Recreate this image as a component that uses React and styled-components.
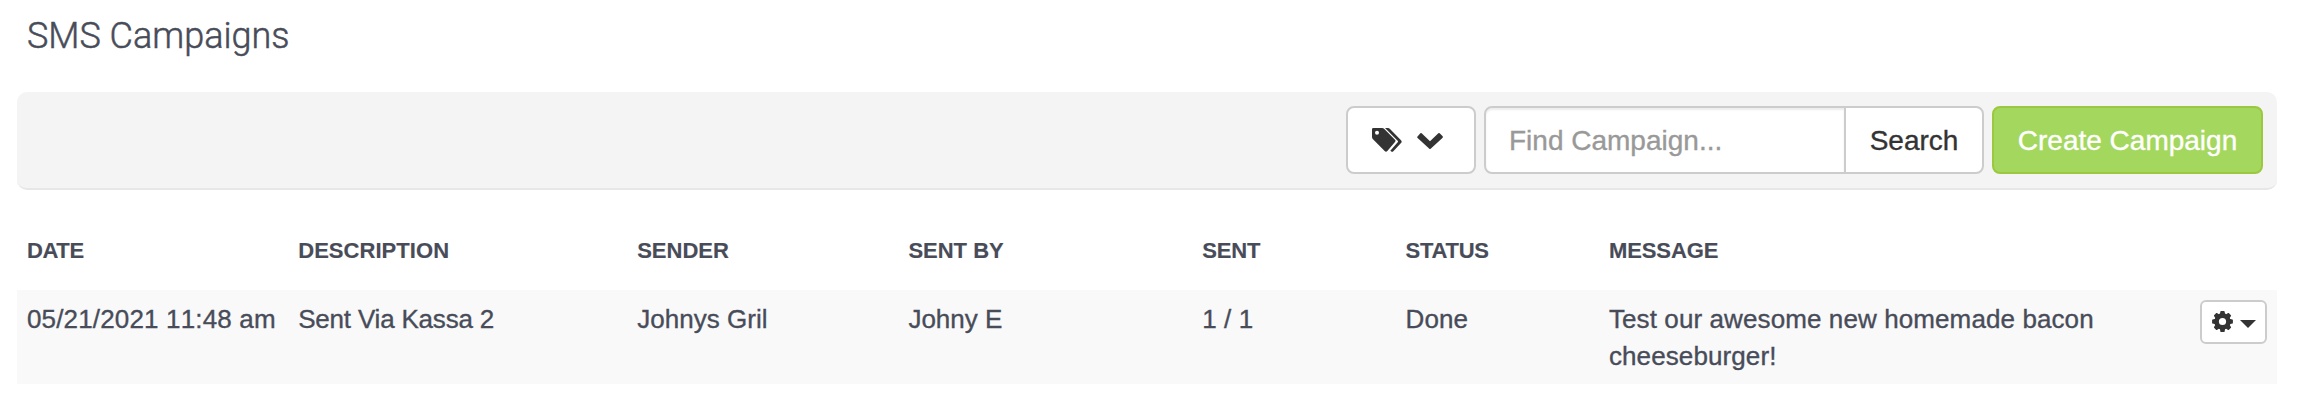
import React from "react";
import styled, { createGlobalStyle, css } from "styled-components";

const GlobalStyle = createGlobalStyle`
  *, *::before, *::after { box-sizing: border-box; }
  body {
    margin: 0;
    background: #fff;
    color: #484c59;
    font-family: "Liberation Sans", Arial, sans-serif;
    font-size: 26px;
    line-height: 37px;
    font-kerning: normal;
    -webkit-text-stroke: 0.35px currentColor;
  }
`;

const Page = styled.main`
  padding: 0 22px 0 17px;
`;

const Title = styled.h1`
  margin: 0;
  padding: 16px 10px 0;
  height: 92px;
  font-family: Roboto, sans-serif;
  font-size: 36px;
  font-weight: 300;
  line-height: 40px;
  -webkit-text-stroke-width: 0.5px;
`;

const Toolbar = styled.div`
  display: flex;
  justify-content: flex-end;
  align-items: flex-start;
  gap: 8px;
  height: 98px;
  padding: 14px;
  background: #f4f4f4;
  border-bottom: 2px solid #e7e7e7;
  border-radius: 10px;
`;

const control = css`
  height: 68px;
  border: 2px solid #ccc;
  border-radius: 8px;
  background: #fff;
  color: #333;
  font-family: inherit;
  font-size: 28px;
  line-height: 40px;
`;

const Button = styled.button`
  ${control}
  display: flex;
  align-items: center;
  justify-content: center;
  width: ${(p) => p.$width}px;
  padding: 2px 0 0;
  white-space: nowrap;
  ${(p) => p.$primary && css`
    background: #a4d75e;
    border-color: #9bc840;
    color: #fff;
  `}
`;

const TagsButton = styled(Button)`
  justify-content: flex-start;
  padding: 0 0 0 24px;
  gap: 15px;
`;

const SearchGroup = styled.div`
  display: flex;

  ${Button} {
    margin-left: -2px;
    border-radius: 0 8px 8px 0;
  }
`;

const SearchInput = styled.input`
  ${control}
  width: 362px;
  padding: 13px 23px 11px;
  border-radius: 8px 0 0 8px;
  box-shadow: inset 0 2px 2px rgba(0, 0, 0, 0.075);
  outline: none;

  &::placeholder {
    color: #999;
    opacity: 1;
    -webkit-text-stroke: 0.35px #999;
  }
`;

const Table = styled.table`
  width: 100%;
  margin-top: 34px;
  table-layout: fixed;
  border-collapse: collapse;
`;

const Col = styled.col`
  width: ${(p) => p.$share}%;
`;

const HeadCell = styled.th`
  height: 66px;
  padding: 11px 10px 23px;
  font-size: 22px;
  line-height: 32px;
  font-weight: 700;
  text-align: left;
  text-transform: uppercase;
  vertical-align: top;
  letter-spacing: ${(p) => p.$tracking || 0}px;
  -webkit-text-stroke-width: 0.15px;
`;

const Cell = styled.td`
  height: 94px;
  padding: 11px 10px 9px;
  background: #f9f9f9;
  vertical-align: top;
  letter-spacing: ${(p) => p.$tracking}px;
  ${(p) => p.$date && css`
    white-space: nowrap;
    font-kerning: none;
  `}
`;

const ActionsCell = styled(Cell)`
  padding: 10px;
`;

const ActionsButton = styled.button`
  display: flex;
  align-items: center;
  gap: 7px;
  width: 67px;
  height: 44px;
  margin-left: auto;
  padding: 0 0 1px 9.500px;
  border: 2px solid #ccc;
  border-radius: 6px;
  background: #fff;
  color: #333;
`;

const Caret = styled.span`
  margin-top: 5px;
  border: 8px solid transparent;
  border-top-color: currentColor;
  border-bottom: 0;
`;

const ChevronSvg = styled.svg`
  margin-top: 1px;
`;

const TagsIcon = () => (
  <svg width="30" height="24" viewBox="0 0 90 72" fill="currentColor">
    <path
      fillRule="evenodd"
      d="M4 0H30Q34 0 37 3L69 35Q72 38 69 42L46 69Q42 73 38 69L3 34Q0 31 0 27V4Q0 0 4 0ZM15 8.500a6 6 0 1 0 0 12a6 6 0 1 0 0-12Z"
    />
    <path d="M39 0H48Q51 0 54 3L87 37Q91 41 87 45L64 70Q61 73 57 70L55 68L77 43Q79 40 77 38Z" />
  </svg>
);

const ChevronDownIcon = () => (
  <ChevronSvg width="26" height="16" viewBox="0 0 78 48" fill="currentColor">
    <path d="M1 11L10 1Q12 -1 14 1L39 25L64 1Q66 -1 68 1L77 10Q78 12 77 14L41 47Q39 49 37 47L1 14Q0 12 1 11Z" />
  </ChevronSvg>
);

const CogIcon = () => (
  <svg width="21" height="21" viewBox="-10.500 -10.500 21 21">
    <circle r="5.900" fill="none" stroke="currentColor" strokeWidth="4.600" />
    {[0, 45, 90, 135, 180, 225, 270, 315].map((angle) => (
      <path
        key={angle}
        transform={`rotate(${angle})`}
        d="M-2.700 -7L-2.100 -9.900Q-2 -10.400 -1.500 -10.400H1.500Q2 -10.400 2.100 -9.900L2.700 -7Z"
        fill="currentColor"
      />
    ))}
  </svg>
);

const columns = [
  { name: "Date", share: 12, headTracking: -0.4, tracking: 0.16 },
  { name: "Description", share: 15, headTracking: 0.05, tracking: -0.2 },
  { name: "Sender", share: 12, tracking: 0.04 },
  { name: "Sent by", share: 13, tracking: 0 },
  { name: "Sent", share: 9, headTracking: -0.1, tracking: 0.1 },
  { name: "Status", share: 9, headTracking: -0.25, tracking: 0.05 },
  { name: "Message", share: 25, headTracking: -0.1, tracking: 0.1 },
  { name: "", share: 5 },
];

const campaigns = [
  [
    "05/21/2021 11:48 am",
    "Sent Via Kassa 2",
    "Johnys Gril",
    "Johny E",
    "1 / 1",
    "Done",
    "Test our awesome new homemade bacon cheeseburger!",
  ],
];

export default function App() {
  return (
    <>
      <GlobalStyle />
      <Page>
        <Title>SMS Campaigns</Title>
        <Toolbar>
          <TagsButton $width={130} aria-label="Filter by tag">
            <TagsIcon />
            <ChevronDownIcon />
          </TagsButton>
          <SearchGroup>
            <SearchInput placeholder="Find Campaign..." />
            <Button $width={140}>Search</Button>
          </SearchGroup>
          <Button $width={271} $primary>Create Campaign</Button>
        </Toolbar>
        <Table>
          <colgroup>
            {columns.map(({ name, share }) => <Col key={name} $share={share} />)}
          </colgroup>
          <thead>
            <tr>
              {columns.map(({ name, headTracking }) => (
                <HeadCell key={name} $tracking={headTracking}>{name}</HeadCell>
              ))}
            </tr>
          </thead>
          <tbody>
            {campaigns.map((values) => (
              <tr key={values[0]}>
                {values.map((value, i) => (
                  <Cell
                    key={columns[i].name}
                    $date={i === 0}
                    $tracking={columns[i].tracking}
                  >
                    {value}
                  </Cell>
                ))}
                <ActionsCell $tracking={0}>
                  <ActionsButton aria-label="Campaign actions">
                    <CogIcon />
                    <Caret />
                  </ActionsButton>
                </ActionsCell>
              </tr>
            ))}
          </tbody>
        </Table>
      </Page>
    </>
  );
}
